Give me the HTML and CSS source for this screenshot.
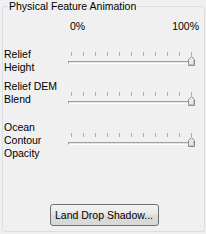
FILE: index.html
```html
<!DOCTYPE html>
<html>
<head>
<meta charset="utf-8">
<link rel="stylesheet" href="styles.css">
</head>
<body>
<fieldset class="group">
  <legend class="group-title">Physical Feature Animation</legend>
  <div class="scale"><span>0%</span><span>100%</span></div>

  <div class="row row-relief">
    <div class="label">Relief<br>Height</div>
    <div class="slider">
      <div class="ticks"><i></i><i></i><i></i><i></i><i></i><i></i><i></i><i></i><i></i><i></i><i></i></div>
      <div class="track"></div>
      <svg class="thumb" width="7" height="10" viewBox="0 0 7 10"><path d="M0.5 9.5 V3.5 L3.5 0.5 L6.5 3.5 V9.5 Z" fill="#e9e9e9" stroke="#8c8c8c"/><path d="M5.5 4 V8.5 H1.5" fill="none" stroke="#bdbdbd"/></svg>
    </div>
  </div>

  <div class="row row-dem">
    <div class="label">Relief DEM<br>Blend</div>
    <div class="slider">
      <div class="ticks"><i></i><i></i><i></i><i></i><i></i><i></i><i></i><i></i><i></i><i></i><i></i></div>
      <div class="track"></div>
      <svg class="thumb" width="7" height="10" viewBox="0 0 7 10"><path d="M0.5 9.5 V3.5 L3.5 0.5 L6.5 3.5 V9.5 Z" fill="#e9e9e9" stroke="#8c8c8c"/><path d="M5.5 4 V8.5 H1.5" fill="none" stroke="#bdbdbd"/></svg>
    </div>
  </div>

  <div class="row row-ocean">
    <div class="label">Ocean<br>Contour<br>Opacity</div>
    <div class="slider">
      <div class="ticks"><i></i><i></i><i></i><i></i><i></i><i></i><i></i><i></i><i></i><i></i><i></i></div>
      <div class="track"></div>
      <svg class="thumb" width="7" height="10" viewBox="0 0 7 10"><path d="M0.5 9.5 V3.5 L3.5 0.5 L6.5 3.5 V9.5 Z" fill="#e9e9e9" stroke="#8c8c8c"/><path d="M5.5 4 V8.5 H1.5" fill="none" stroke="#bdbdbd"/></svg>
    </div>
  </div>

  <div class="actions"><button class="btn">Land Drop Shadow...</button></div>
</fieldset>
</body>
</html>
```

FILE: styles.css
```css
html, body {
  margin: 0;
  padding: 0;
  background: #f0f0f0;
}
body {
  font-family: "Liberation Sans", Arial, sans-serif;
  font-size: 10.5px;
  line-height: 13px;
  color: #000;
}
.group {
  margin: 0 1px 2px 2px;
  padding: 0;
  border: 1px solid #d5dfe5;
  border-radius: 3px;
  min-width: 0;
}
.group-title {
  margin-left: 5px;
  padding: 0 1px;
  line-height: 13px;
}
.scale {
  display: flex;
  justify-content: space-between;
  margin: 7px 5px 0 67px;
}
.row {
  display: grid;
  grid-template-columns: 64px 130px;
  margin-left: 1px;
}
.row-relief { margin-top: 15px; }
.row-dem { margin-top: 6px; }
.row-ocean { margin-top: 15px; }
.row-relief .slider { margin-top: 4px; }
.row-dem .slider { margin-top: 12px; }
.row-ocean .slider { margin-top: 12px; }
.label {
  white-space: nowrap;
}
.slider {
  position: relative;
  height: 14px;
}
.ticks {
  display: flex;
  gap: 11px;
  margin-left: 3px;
  height: 4px;
}
.ticks i {
  display: block;
  width: 1px;
  height: 4px;
  background: #acacac;
}
.track {
  margin-top: 5px;
  width: 122px;
  height: 3px;
  box-sizing: border-box;
  border-top: 1px solid #a0a0a0;
  border-left: 1px solid #a0a0a0;
  border-bottom: 1px solid #ffffff;
  background: #e4e4e4;
}
.thumb {
  position: absolute;
  left: 120px;
  top: 4px;
  display: block;
}
.actions {
  display: flex;
  justify-content: center;
  margin-top: 44px;
  margin-bottom: 5px;
}
.btn {
  width: 109px;
  height: 22px;
  margin-left: 1px;
  padding: 0;
  font-family: "Liberation Sans", Arial, sans-serif;
  font-size: 10.5px;
  color: #000;
  border: 1px solid #707070;
  border-radius: 3px;
  background: linear-gradient(#f4f4f4, #e6e6e6 50%, #dcdcdc 51%, #d8d8d8);
}
```
